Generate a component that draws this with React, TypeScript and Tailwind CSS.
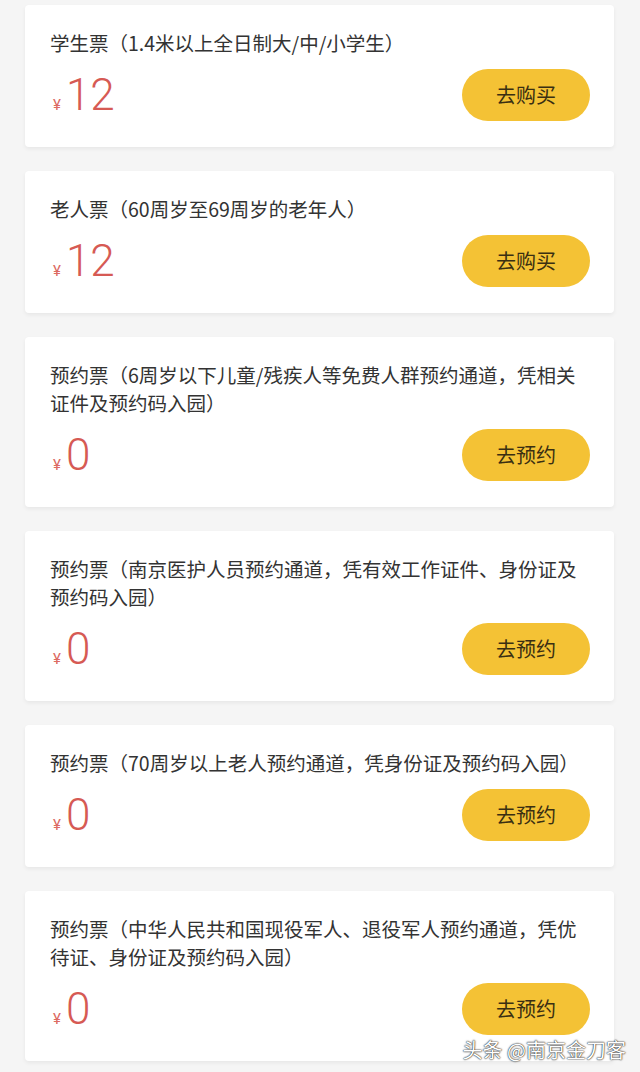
import React from "react";

type Ticket = { title: string; price: string; action: string };

const tickets: Ticket[] = [
  { title: "学生票（1.4米以上全日制大/中/小学生）", price: "12", action: "去购买" },
  { title: "老人票（60周岁至69周岁的老年人）", price: "12", action: "去购买" },
  {
    title: "预约票（6周岁以下儿童/残疾人等免费人群预约通道，凭相关证件及预约码入园）",
    price: "0",
    action: "去预约",
  },
  {
    title: "预约票（南京医护人员预约通道，凭有效工作证件、身份证及预约码入园）",
    price: "0",
    action: "去预约",
  },
  { title: "预约票（70周岁以上老人预约通道，凭身份证及预约码入园）", price: "0", action: "去预约" },
  {
    title: "预约票（中华人民共和国现役军人、退役军人预约通道，凭优待证、身份证及预约码入园）",
    price: "0",
    action: "去预约",
  },
];

function Card({ t }: { t: Ticket }) {
  return (
    <div className="bg-white rounded-[4px] shadow-[0_2px_4px_rgba(0,0,0,0.06)] pl-[25px] pr-[24px] pt-[24px] pb-[26px]">
      <div
        className="text-[19.5px] leading-[28px] text-[#333333]"
        style={{ fontFamily: '"Noto Sans CJK SC", "Noto Sans", sans-serif' }}
      >
        {t.title}
      </div>
      <div className="mt-[12px] flex items-center justify-between">
        <div className="flex items-baseline pl-[3px] text-[#d65a54]" style={{ fontFamily: "Roboto, sans-serif" }}>
          <span className="text-[15px] mr-[5px] text-[#dc6a62]">¥</span>
          <span className="text-[44px] leading-[52px] font-light">{t.price}</span>
        </div>
        <button
          className="w-[128px] h-[52px] rounded-full bg-[#f4c235] text-[20px] text-[#3a2f12]"
          style={{ fontFamily: '"Noto Sans CJK SC", sans-serif' }}
        >
          {t.action}
        </button>
      </div>
    </div>
  );
}

export default function App() {
  return (
    <div className="relative w-[640px] h-[1072px] overflow-hidden bg-[#f5f5f5]">
      <div className="flex flex-col gap-[24px] pt-[5px] pl-[25px] pr-[26px]">
        {tickets.map((t, i) => (
          <Card key={i} t={t} />
        ))}
      </div>
      <div
        className="absolute right-[14px] bottom-[10px] text-[20px] leading-[24px] text-white"
        style={{
          fontFamily: '"Noto Sans CJK SC", sans-serif',
          textShadow: "0 0 2px rgba(0,0,0,0.8), 0 0 1px rgba(0,0,0,1)",
        }}
      >
        头条 @南京金刀客
      </div>
    </div>
  );
}
